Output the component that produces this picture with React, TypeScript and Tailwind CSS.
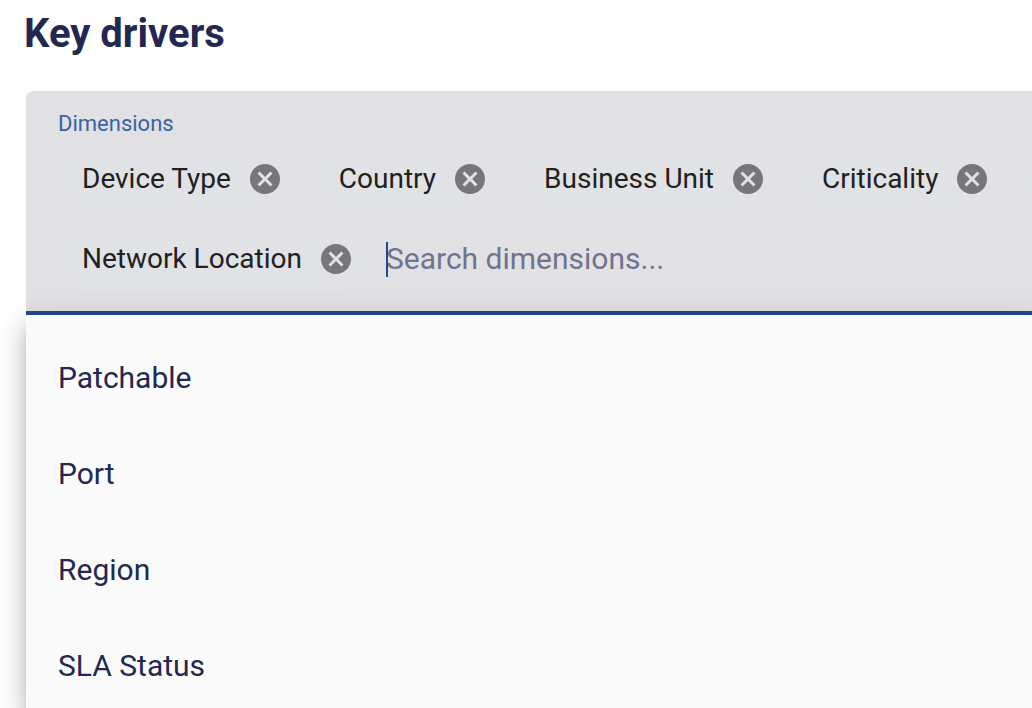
import { useState } from "react"

const allOptions = ["Patchable", "Port", "Region", "SLA Status"]

const CancelIcon = () => (
  <svg viewBox="0 0 24 24" className="size-9 fill-[#777779]" aria-hidden="true">
    <path d="M12 2C6.47 2 2 6.47 2 12s4.47 10 10 10 10-4.47 10-10S17.53 2 12 2zm5 13.59L15.59 17 12 13.41 8.41 17 7 15.59 10.59 12 7 8.41 8.41 7 12 10.59 15.59 7 17 8.41 13.41 12 17 15.59z" />
  </svg>
)

type ChipProps = {
  name: string
  onRemove: () => void
}

const Chip = ({ name, onRemove }: ChipProps) => (
  <li className="flex h-16 shrink-0 items-center gap-4 rounded-full bg-[#e0e2e5] pl-6 pr-4 text-[28px] text-[#212121]">
    {name}
    <button type="button" aria-label={`Remove ${name}`} onClick={onRemove}>
      <CancelIcon />
    </button>
  </li>
)

const App = () => {
  const [firstRow, setFirstRow] = useState([
    "Device Type",
    "Country",
    "Business Unit",
    "Criticality",
  ])
  const [secondRow, setSecondRow] = useState(["Network Location"])
  const [search, setSearch] = useState("")

  const options = allOptions.filter((item) =>
    item.toLowerCase().includes(search.toLowerCase())
  )

  return (
    <main className="flex h-screen flex-col overflow-hidden bg-white pt-2.5 font-['Roboto',sans-serif]">
      <h1 className="pl-6 text-[40px] leading-12 font-bold text-[#22284f]">
        Key drivers
      </h1>

      <section className="mt-[33px] ml-[26px] shrink-0 rounded-tl-lg border-b-4 border-[#1f4b8e] bg-[#e1e1e3] pt-4 pb-5 pl-8">
        <label
          htmlFor="dimensions"
          className="block text-[22px] leading-[34px] text-[#3a63a5]"
        >
          Dimensions
        </label>
        <ul className="mt-1.5 flex gap-4 overflow-hidden">
          {firstRow.map((item) => (
            <Chip
              key={item}
              name={item}
              onRemove={() => setFirstRow(firstRow.filter((i) => i !== item))}
            />
          ))}
          <li
            aria-hidden="true"
            className="h-16 w-60 shrink-0 rounded-full bg-[#e0e2e5]"
          />
        </ul>
        <div className="mt-4 flex items-center gap-4">
          <ul className="flex gap-4">
            {secondRow.map((item) => (
              <Chip
                key={item}
                name={item}
                onRemove={() =>
                  setSecondRow(secondRow.filter((i) => i !== item))
                }
              />
            ))}
          </ul>
          <div className="relative flex-1">
            {search === "" && (
              <span className="absolute inset-y-0 left-0 my-auto h-[35px] w-0.5 bg-[#1f4b8e]" />
            )}
            <input
              id="dimensions"
              type="text"
              autoComplete="off"
              placeholder="Search dimensions..."
              value={search}
              onChange={(e) => setSearch(e.target.value)}
              className="w-full bg-transparent text-[30px] leading-10 text-[#22284f] outline-none placeholder:text-[#70748f]"
            />
          </div>
        </div>
      </section>

      <ul
        aria-label="Dimensions"
        className="ml-[26px] min-h-0 flex-1 bg-[#fafafa] pt-3.5 shadow-[0_10px_10px_-6px_rgba(0,0,0,0.2),0_16px_20px_2px_rgba(0,0,0,0.14),0_6px_28px_4px_rgba(0,0,0,0.12)]"
      >
        {options.map((item) => (
          <li key={item}>
            <button
              type="button"
              className="h-24 w-full px-8 text-left text-[30px] text-[#22284f]"
            >
              {item}
            </button>
          </li>
        ))}
      </ul>
    </main>
  )
}

export default App
